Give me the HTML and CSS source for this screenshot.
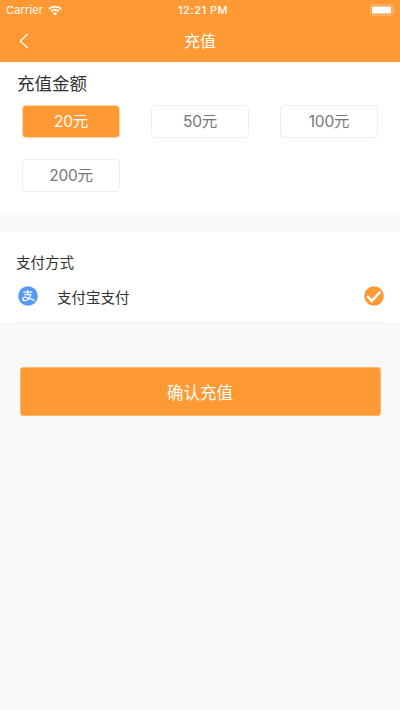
FILE: index.html
```html
<!DOCTYPE html>
<html lang="zh-CN">
<head>
<meta charset="utf-8">
<title>充值</title>
<link rel="stylesheet" href="styles.css">
</head>
<body>
<header class="header">
  <div class="status">
    <div class="carrier"><span>Carrier</span>
      <svg class="wifi" width="14" height="11" viewBox="0 0 14 11"><path d="M.9 4a8.8 8.8 0 0 1 12.2 0M3 6.4a5.8 5.8 0 0 1 8 0" fill="none" stroke="#fff" stroke-width="1.8"/><path d="M4.8 8.2a3.2 3.2 0 0 1 4.4 0L7 10.4z" fill="#fff"/></svg>
    </div>
    <div class="time">12:21 PM</div>
    <div class="power">
      <svg width="26" height="12" viewBox="0 0 26 12"><rect x=".6" y=".6" width="22" height="10.8" rx="2.6" fill="none" stroke="#ffb670" stroke-width="1.2"/><rect x="2" y="2.5" width="19.2" height="7" rx=".8" fill="#fff"/><path d="M24 4.2q1.3.3 1.3 1.8T24 7.8z" fill="#ffc48b"/></svg>
    </div>
  </div>
  <nav class="nav">
    <svg class="back" width="10" height="16" viewBox="0 0 10 16"><path d="M8.6 1 1.4 8l7.2 7" fill="none" stroke="#fff" stroke-width="1.3"/></svg>
    <h1 class="title">充值</h1>
  </nav>
</header>
<section class="amount">
  <h2 class="amount-title">充值金额</h2>
  <div class="options">
    <button class="option selected">20元</button>
    <button class="option">50元</button>
    <button class="option">100元</button>
    <button class="option">200元</button>
  </div>
</section>
<section class="payment">
  <h2 class="payment-title">支付方式</h2>
  <div class="method">
    <svg width="20" height="20" viewBox="0 0 20 20"><circle cx="10" cy="10" r="9.8" fill="#5599f4"/><path d="M5.4 6.2h8.8M9.8 4v4.6M6.3 8.7h6.5c-.8 2.8-3 5.9-5.6 5.9-3.3 0-3.2-3.4-.4-3.4 2.4 0 5.8 1.9 9.8 3.4" fill="none" stroke="#fff" stroke-width="1.2"/></svg>
    <span class="method-name">支付宝支付</span>
    <svg width="20" height="20" viewBox="0 0 20 20"><circle cx="10" cy="10" r="9.8" fill="#ff9933"/><path d="m4 10.8 3.8 4 7.9-8.4" fill="none" stroke="#fff" stroke-width="2.6" stroke-linecap="round"/></svg>
  </div>
</section>
<button class="confirm">确认充值</button>
</body>
</html>
```
FILE: styles.css
```css
* { box-sizing: border-box; }
body {
  margin: 0;
  min-height: 710px;
  background: #f9f9f9;
  color: #333;
  font-family: Inter, "Noto Sans CJK SC", sans-serif;
}
h1, h2 { margin: 0; font-weight: 400; }
svg { display: block; flex: none; }
button { font-family: inherit; padding: 0; }
.header { height: 62px; background: #ff9933; color: #fff; }
.status {
  display: grid;
  grid-template-columns: 1fr auto 1fr;
  align-items: center;
  height: 20px;
  padding: 0 4px 0 6px;
  font-size: 11px;
}
.carrier { display: flex; align-items: center; gap: 5px; letter-spacing: .15px; }
.time { margin-left: 4px; font-weight: 500; letter-spacing: .5px; }
.power { justify-self: end; }
.nav {
  display: grid;
  grid-template-columns: 1fr auto 1fr;
  align-items: center;
  height: 42px;
  padding: 0 19px;
}
.title { font-size: 16px; line-height: 24px; }
.amount { height: 151px; padding: 10px 22px 0; background: #fff; }
.amount-title { margin-left: -5px; font-size: 17.5px; line-height: 24px; }
.options {
  display: grid;
  grid-template-columns: repeat(3, 98px);
  justify-content: space-between;
  row-gap: 21px;
  margin-top: 9px;
}
.option {
  height: 33px;
  padding-bottom: 3px;
  border: 1px solid #eee;
  border-radius: 4px;
  background: #fff;
  color: #777;
  font-size: 15.5px;
  letter-spacing: -.2px;
}
.option.selected { background: #ff9933; color: #fff; border-color: #ffd6ac; }
.payment { height: 91px; margin-top: 19px; padding: 19px 16px 0; background: #fff; border-bottom: 1px solid #f9f9f9; }
.payment-title { font-size: 14.5px; line-height: 24px; }
.method {
  display: flex;
  align-items: center;
  height: 48px;
  padding: 0 0 5px 2px;
  border-bottom: 1px solid #ededed;
}
.method-name { flex: 1; margin-left: 19px; font-size: 14.5px; }
.confirm {
  display: block;
  width: 361px;
  height: 49px;
  margin: 44px auto 0;
  border: 1px solid #ffb76f;
  border-radius: 3px;
  background: #ff9933;
  color: #fff;
  font-size: 16.5px;
}
```
